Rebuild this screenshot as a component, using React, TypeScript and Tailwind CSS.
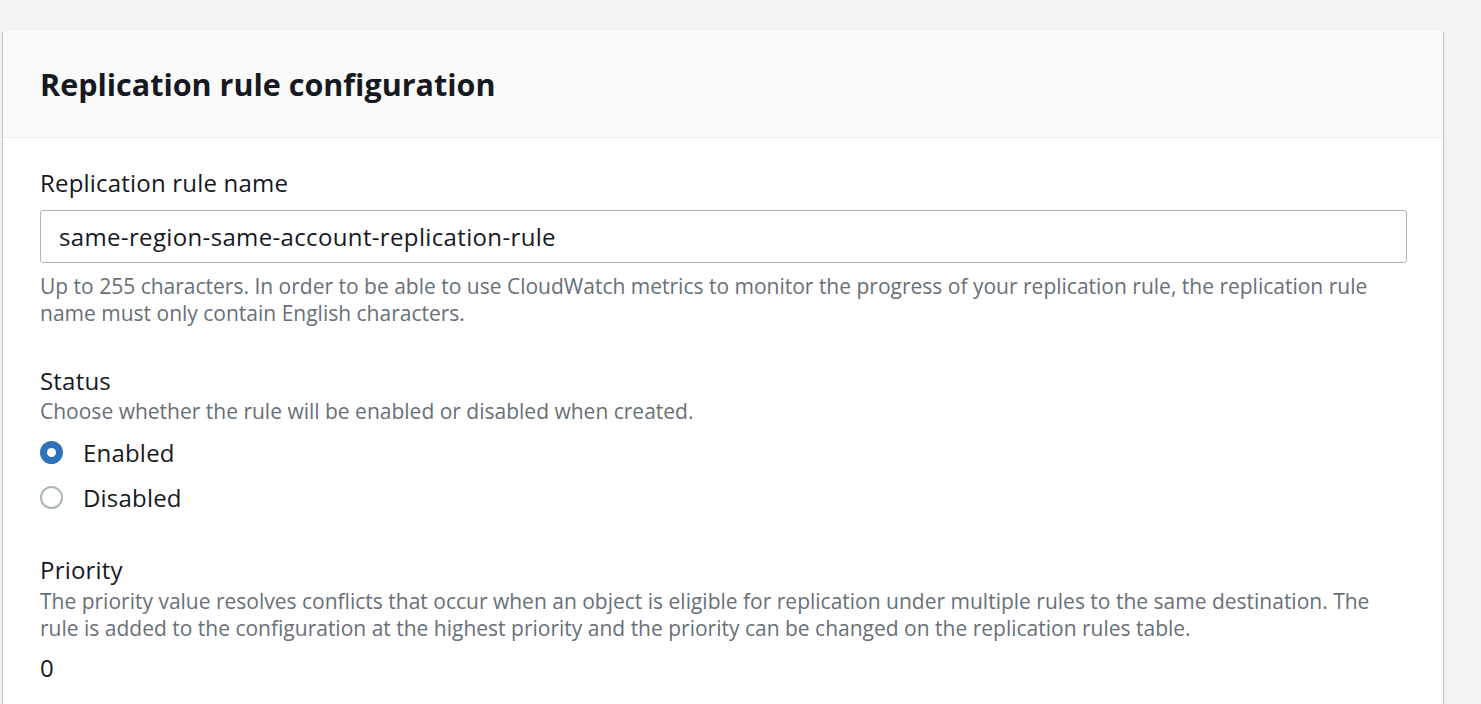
import React from 'react'

// Tarjeta de configuración de la regla de replicación (consola S3).
const font = { fontFamily: '"Open Sans", "Noto Sans", Arial, sans-serif' }

function Radio({ label, checked }: { label: string; checked?: boolean }) {
  return (
    <label className="flex items-center h-[45px] gap-[20px]">
      {checked ? (
        <span className="w-[23px] h-[23px] rounded-full bg-[#2c73ba] flex items-center justify-center shrink-0">
          <span className="w-[9px] h-[9px] rounded-full bg-white" />
        </span>
      ) : (
        <span className="w-[23px] h-[23px] rounded-full border-2 border-[#aab7b8] bg-white shrink-0" />
      )}
      <span className="text-[24px] leading-[32px] tracking-[0.2px] text-[#16191f]">{label}</span>
    </label>
  )
}

export default function App() {
  return (
    <div className="w-[1481px] h-[704px] bg-[#f2f3f3] pt-[31px] pl-[3px] overflow-hidden" style={font}>
      <div className="w-[1440px] bg-white shadow-[0_1px_1px_0_rgba(0,28,36,0.3),1px_1px_1px_0_rgba(0,28,36,0.15),-1px_1px_1px_0_rgba(0,28,36,0.15)]">
        <div className="h-[107px] bg-[#fafafa] border-b border-[#eaeded] pl-[37px] flex items-center">
          <h2 className="text-[30.5px] font-bold text-[#16191f] leading-[36px]">Replication rule configuration</h2>
        </div>
        <div className="pl-[37px] pr-[36px] pt-[29px] pb-[40px]">
          <div className="text-[24px] leading-[32px] tracking-[0.2px] text-[#16191f]">Replication rule name</div>
          <input
            readOnly
            value="same-region-same-account-replication-rule"
            className="mt-[11px] w-[1367px] h-[53px] border border-[#aab7b8] rounded-[3px] px-[18px] text-[24px] tracking-[0.35px] text-[#16191f] outline-none"
            style={font}
          />
          <p className="mt-[10px] text-[21px] leading-[27px] text-[#687078]">
            Up to 255 characters. In order to be able to use CloudWatch metrics to monitor the progress of your replication rule, the replication rule name must only contain English characters.
          </p>

          <div className="mt-[38px] text-[24px] leading-[32px] tracking-[0.2px] text-[#16191f]">Status</div>
          <p className="mt-[1px] text-[21px] leading-[27px] text-[#687078]">
            Choose whether the rule will be enabled or disabled when created.
          </p>
          <div className="mt-[5px] flex flex-col">
            <Radio label="Enabled" checked />
            <Radio label="Disabled" />
          </div>

          <div className="mt-[34px] text-[24px] leading-[32px] tracking-[0.2px] text-[#16191f]">Priority</div>
          <p className="mt-[2px] text-[21px] leading-[27px] text-[#687078]">
            The priority value resolves conflicts that occur when an object is eligible for replication under multiple rules to the same destination. The rule is added to the configuration at the highest priority and the priority can be changed on the replication rules table.
          </p>
          <div className="mt-[10px] text-[24px] leading-[32px] text-[#16191f]">0</div>
        </div>
      </div>
    </div>
  )
}
